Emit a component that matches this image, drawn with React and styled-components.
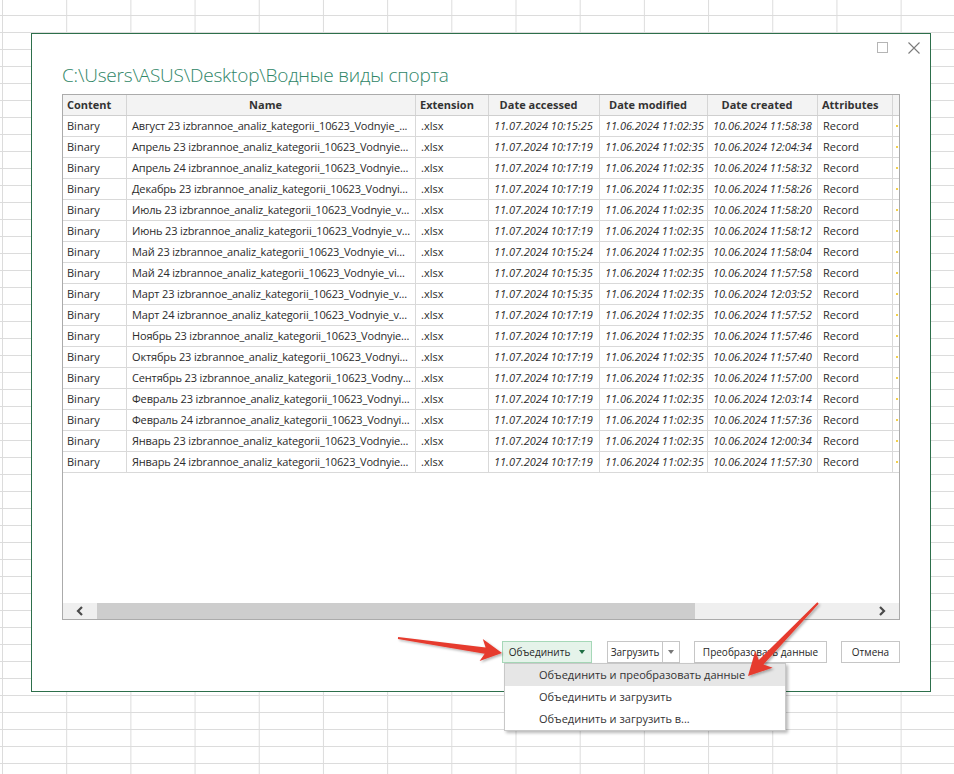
import styled, { createGlobalStyle } from "styled-components"

const GlobalStyle = createGlobalStyle`
  * { box-sizing: border-box; }
  body {
    margin: 0;
    background-color: #fff;
    background-image:
      linear-gradient(to right, #dcdcdc 1px, transparent 1px),
      linear-gradient(to bottom, #dcdcdc 1px, transparent 1px);
    background-size: 64.2px 17px;
    background-position: 2px 15px;
    font-family: "Open Sans", "Noto Sans", sans-serif;
    color: #262626;
  }
`

const Page = styled.div`
  position: relative;
  width: 954px;
  height: 774px;
  padding: 33px 0 0 31px;
`

const Dialog = styled.div`
  width: 900px;
  background: #fff;
  border: 1px solid #2d6f4b;
  padding: 0 30px 28px;
  display: flex;
  flex-direction: column;
`

const TopBar = styled.div`
  display: flex;
  justify-content: flex-end;
  align-items: center;
  gap: 20px;
  padding-top: 8px;
  height: 19px;
  margin-right: -20px;
`

const MaxBox = styled.div`
  width: 11px;
  height: 11px;
  border: 1px solid #b5b5b5;
`

const Title = styled.h1`
  margin: 9px 0 6px;
  font-family: "Open Sans", sans-serif;
  font-weight: 300;
  font-size: 19px;
  letter-spacing: -0.2px;
  line-height: 26px;
  color: #2f8667;
  white-space: nowrap;
`

const TableBox = styled.div`
  height: 526px;
  border: 1px solid #ababab;
  display: flex;
  flex-direction: column;
  overflow: hidden;
`

const Grid = styled.div`
  flex: 1;
  overflow: hidden;
`

const Row = styled.div`
  display: grid;
  grid-template-columns: 64px 289px 73px 111px 108px 110px 75px 5px;
  height: 21px;
  border-bottom: 1px solid ${(p) => (p.$head ? "#cfcfcf" : "#d9d9d9")};
  background: ${(p) => (p.$head ? "#f3f3f3" : "#fff")};
`

const Cell = styled.div`
  font-size: 11px;
  line-height: 20px;
  white-space: nowrap;
  overflow: hidden;
  padding: 0 2px 0 ${(p) => (p.$first ? 4 : 5)}px;
  border-right: 1px solid #d9d9d9;
  font-style: ${(p) => (p.$italic ? "italic" : "normal")};
  letter-spacing: ${(p) => (p.$tight ? "-0.15px" : "0")};
  color: #2b2b2b;
`

const HeadCell = styled.div`
  font-size: 11px;
  font-weight: 700;
  line-height: 20px;
  white-space: nowrap;
  overflow: hidden;
  text-align: center;
  padding: 0 15px 0 4px;
  border-right: 1px solid #d5d5d5;
  color: #333;
`

const EdgeCell = styled.div`
  position: relative;
  &::after {
    content: "";
    position: absolute;
    left: 3px;
    top: 9px;
    width: 2px;
    height: 2px;
    background: #f2d04a;
  }
`

const ScrollBar = styled.div`
  height: 16px;
  display: flex;
  align-items: stretch;
  background: #efefef;
`

const ScrollArrow = styled.div`
  width: 34px;
  display: flex;
  align-items: center;
  justify-content: center;
`

const ScrollTrack = styled.div`
  flex: 1;
  display: flex;
`

const Thumb = styled.div`
  width: 598px;
  background: #cdcdcd;
`

const ButtonRow = styled.div`
  margin-top: 21px;
  display: flex;
  justify-content: flex-end;
  gap: 14px;
  height: 22px;
`

const Btn = styled.div`
  width: ${(p) => p.$w}px;
  height: 22px;
  display: flex;
  align-items: center;
  justify-content: center;
  gap: 9px;
  font-size: 10px;
  color: #262626;
  white-space: nowrap;
  border: 1px solid ${(p) => (p.$primary ? "#a6d8b8" : "#c6c6c6")};
  background: ${(p) => (p.$primary ? "#e5f3ea" : "#fff")};
`

const MenuAnchor = styled.div`
  position: relative;
  margin-right: 1px;
`

const Split = styled.div`
  display: flex;
  height: 22px;
  border: 1px solid #c6c6c6;
  font-size: 10px;
`

const SplitMain = styled.div`
  width: 55px;
  display: flex;
  align-items: center;
  justify-content: center;
  border-right: 1px solid #c6c6c6;
`

const SplitArrow = styled.div`
  width: 16px;
  display: flex;
  align-items: center;
  justify-content: center;
`

const Caret = styled.span`
  width: 0;
  height: 0;
  border-left: 3.5px solid transparent;
  border-right: 3.5px solid transparent;
  border-top: 4px solid ${(p) => p.$color};
`

const Menu = styled.div`
  position: absolute;
  left: 2px;
  top: 22px;
  width: 282px;
  background: #fff;
  border: 1px solid #c8c8c8;
  box-shadow: 2px 2px 3px rgba(0, 0, 0, 0.28);
  z-index: 2;
`

const MenuItem = styled.div`
  height: 22px;
  line-height: 22px;
  padding-left: 34px;
  font-size: 11px;
  color: #333;
  white-space: nowrap;
  background: ${(p) => (p.$active ? "#e6e6e6" : "transparent")};
`

const Overlay = styled.svg`
  position: absolute;
  left: 0;
  top: 0;
  pointer-events: none;
  z-index: 5;
`

const names = [
  "Август 23 izbrannoe_analiz_kategorii_10623_Vodnyie_...",
  "Апрель 23 izbrannoe_analiz_kategorii_10623_Vodnyie...",
  "Апрель 24 izbrannoe_analiz_kategorii_10623_Vodnyie...",
  "Декабрь 23 izbrannoe_analiz_kategorii_10623_Vodnyi...",
  "Июль 23 izbrannoe_analiz_kategorii_10623_Vodnyie_v...",
  "Июнь 23 izbrannoe_analiz_kategorii_10623_Vodnyie_v...",
  "Май 23 izbrannoe_analiz_kategorii_10623_Vodnyie_vi...",
  "Май 24 izbrannoe_analiz_kategorii_10623_Vodnyie_vi...",
  "Март 23 izbrannoe_analiz_kategorii_10623_Vodnyie_v...",
  "Март 24 izbrannoe_analiz_kategorii_10623_Vodnyie_v...",
  "Ноябрь 23 izbrannoe_analiz_kategorii_10623_Vodnyie...",
  "Октябрь 23 izbrannoe_analiz_kategorii_10623_Vodnyi...",
  "Сентябрь 23 izbrannoe_analiz_kategorii_10623_Vodny...",
  "Февраль 23 izbrannoe_analiz_kategorii_10623_Vodnyi...",
  "Февраль 24 izbrannoe_analiz_kategorii_10623_Vodnyi...",
  "Январь 23 izbrannoe_analiz_kategorii_10623_Vodnyie...",
  "Январь 24 izbrannoe_analiz_kategorii_10623_Vodnyie...",
]

const accessed = [
  "10:15:25", "10:17:19", "10:17:19", "10:17:19", "10:17:19", "10:17:19",
  "10:15:24", "10:15:35", "10:15:35", "10:17:19", "10:17:19", "10:17:19",
  "10:17:19", "10:17:19", "10:17:19", "10:17:19", "10:17:19",
]

const created = [
  "11:58:38", "12:04:34", "11:58:32", "11:58:26", "11:58:20", "11:58:12",
  "11:58:04", "11:57:58", "12:03:52", "11:57:52", "11:57:46", "11:57:40",
  "11:57:00", "12:03:14", "11:57:36", "12:00:34", "11:57:30",
]

const headers = ["Content", "Name", "Extension", "Date accessed", "Date modified", "Date created", "Attributes"]

// tapered arrow: thin tail, swept head
const arrow = (x1, y1, x2, y2, head = 19, half = 11, tail = 1, shaft = 3.2) => {
  const len = Math.hypot(x2 - x1, y2 - y1)
  const dx = (x2 - x1) / len
  const dy = (y2 - y1) / len
  const px = -dy
  const py = dx
  const bx = x2 - dx * head
  const by = y2 - dy * head
  const pts = [
    [x1 + px * tail, y1 + py * tail],
    [bx + px * shaft + dx * 2, by + py * shaft + dy * 2],
    [bx + px * half - dx * 2, by + py * half - dy * 2],
    [x2, y2],
    [bx - px * half - dx * 2, by - py * half - dy * 2],
    [bx - px * shaft + dx * 2, by - py * shaft + dy * 2],
    [x1 - px * tail, y1 - py * tail],
  ]
  return pts.map((p) => p.map((v) => v.toFixed(1)).join(",")).join(" ")
}

const App = () => {
  return (
    <Page>
      <GlobalStyle />
      <Dialog>
        <TopBar>
          <MaxBox />
          <svg width="12" height="12" viewBox="0 0 12 12">
            <path d="M0.5 0.5 L11.5 11.5 M11.5 0.5 L0.5 11.5" stroke="#7a7a7a" strokeWidth="1.1" />
          </svg>
        </TopBar>
        <Title>C:\Users\ASUS\Desktop\Водные виды спорта</Title>
        <TableBox>
          <Grid>
            <Row $head>
              {headers.map((h) => (
                <HeadCell key={h}>{h}</HeadCell>
              ))}
              <div />
            </Row>
            {names.map((n, i) => (
              <Row key={n}>
                <Cell $first>Binary</Cell>
                <Cell $tight>{n}</Cell>
                <Cell>.xlsx</Cell>
                <Cell $italic>11.07.2024 {accessed[i]}</Cell>
                <Cell $italic>11.06.2024 11:02:35</Cell>
                <Cell $italic>10.06.2024 {created[i]}</Cell>
                <Cell>Record</Cell>
                <EdgeCell />
              </Row>
            ))}
          </Grid>
          <ScrollBar>
            <ScrollArrow>
              <svg width="8" height="10" viewBox="0 0 8 10">
                <path d="M6 1 L2 5 L6 9" stroke="#4a4a4a" strokeWidth="2.2" fill="none" />
              </svg>
            </ScrollArrow>
            <ScrollTrack>
              <Thumb />
            </ScrollTrack>
            <ScrollArrow>
              <svg width="8" height="10" viewBox="0 0 8 10">
                <path d="M2 1 L6 5 L2 9" stroke="#4a4a4a" strokeWidth="2.2" fill="none" />
              </svg>
            </ScrollArrow>
          </ScrollBar>
        </TableBox>
        <ButtonRow>
          <MenuAnchor>
            <Btn $primary $w={90}>
              Объединить
              <Caret $color="#1f6e43" />
            </Btn>
            <Menu>
              <MenuItem $active>Объединить и преобразовать данные</MenuItem>
              <MenuItem>Объединить и загрузить</MenuItem>
              <MenuItem>Объединить и загрузить в...</MenuItem>
            </Menu>
          </MenuAnchor>
          <Split>
            <SplitMain>Загрузить</SplitMain>
            <SplitArrow>
              <Caret $color="#777" />
            </SplitArrow>
          </Split>
          <Btn $w={133}>Преобразовать данные</Btn>
          <Btn $w={59}>Отмена</Btn>
        </ButtonRow>
      </Dialog>
      <Overlay width="954" height="774" viewBox="0 0 954 774">
        <defs>
          <filter id="sh" x="-20%" y="-20%" width="140%" height="140%">
            <feDropShadow dx="1.5" dy="1.5" stdDeviation="1.2" floodColor="#000" floodOpacity="0.3" />
          </filter>
        </defs>
        <polygon points={arrow(398, 638, 502, 653)} fill="#e63b2e" filter="url(#sh)" />
        <polygon points={arrow(818, 603, 748, 676, 21, 12)} fill="#e63b2e" filter="url(#sh)" />
      </Overlay>
    </Page>
  )
}

export default App
